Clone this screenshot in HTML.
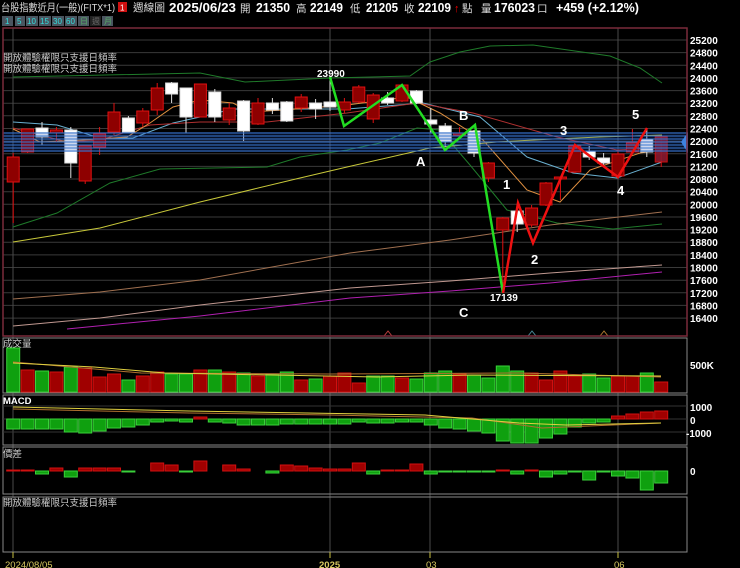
<!DOCTYPE html>
<html><head><meta charset="utf-8"><style>
html,body{margin:0;padding:0;background:#000;width:740px;height:568px;overflow:hidden}
svg{display:block}
text{font-family:"Liberation Sans","Noto Sans CJK TC",sans-serif}
</style></head><body>
<svg width="740" height="568" viewBox="0 0 740 568" xmlns="http://www.w3.org/2000/svg">
<rect width="740" height="568" fill="#000"/>
<!-- header -->
<text x="1" y="11" font-size="10.5" fill="#ddd" textLength="114" lengthAdjust="spacingAndGlyphs">台股指數近月(一般)(FITX*1)</text>
<rect x="118" y="2" width="9" height="10" fill="#d01010"/><text x="120" y="10.5" font-size="8" fill="#fff">1</text>
<text x="133" y="11" font-size="10.5" fill="#ddd" textLength="32" lengthAdjust="spacingAndGlyphs">週線圖</text>
<g font-size="13" font-weight="bold" fill="#fff">
<text x="169" y="12" textLength="67" lengthAdjust="spacingAndGlyphs">2025/06/23</text>
<text x="240" y="12" font-size="10.5" font-weight="normal" fill="#ddd">開</text><text x="256" y="12" textLength="34" lengthAdjust="spacingAndGlyphs">21350</text>
<text x="296" y="12" font-size="10.5" font-weight="normal" fill="#ddd">高</text><text x="310" y="12" textLength="33" lengthAdjust="spacingAndGlyphs">22149</text>
<text x="350" y="12" font-size="10.5" font-weight="normal" fill="#ddd">低</text><text x="366" y="12" textLength="32" lengthAdjust="spacingAndGlyphs">21205</text>
<text x="404" y="12" font-size="10.5" font-weight="normal" fill="#ddd">收</text><text x="418" y="12" textLength="33" lengthAdjust="spacingAndGlyphs">22109</text>
<text x="454" y="12" fill="#e00" font-size="11">↑</text><text x="462" y="12" font-size="10.5" font-weight="normal" fill="#ddd">點</text>
<text x="481" y="12" font-size="10.5" font-weight="normal" fill="#ddd">量</text><text x="494" y="12" textLength="41" lengthAdjust="spacingAndGlyphs">176023</text>
<text x="537" y="12" font-size="10.5" font-weight="normal" fill="#ddd">口</text>
<text x="556" y="12" textLength="83" lengthAdjust="spacingAndGlyphs">+459 (+2.12%)</text>
</g>
<!-- buttons -->
<g font-size="8" fill="#3dd">
<rect x="2" y="16" width="11" height="10" fill="#4a5560"/><text x="5" y="24">1</text>
<rect x="15" y="16" width="10" height="10" fill="#4a5560"/><text x="17" y="24">5</text>
<rect x="26" y="16" width="12" height="10" fill="#4a5560"/><text x="27" y="24">10</text>
<rect x="39" y="16" width="12" height="10" fill="#4a5560"/><text x="40" y="24">15</text>
<rect x="52" y="16" width="12" height="10" fill="#4a5560"/><text x="53" y="24">30</text>
<rect x="65" y="16" width="12" height="10" fill="#4a5560"/><text x="66" y="24">60</text>
<rect x="78" y="16" width="11" height="10" fill="#4a5560"/><text x="80" y="24" fill="#5a6">日</text>
<rect x="90" y="16" width="11" height="10" fill="#222"/><text x="92" y="24" fill="#666">週</text>
<rect x="102" y="16" width="11" height="10" fill="#4a5560"/><text x="104" y="24" fill="#5a6">月</text>
</g>
<!-- main panel grid -->
<g stroke="#3a3a3a" stroke-width="1">
<line x1="3" x2="687" y1="40" y2="40"/><line x1="3" x2="687" y1="52.6" y2="52.6"/><line x1="3" x2="687" y1="65.3" y2="65.3"/><line x1="3" x2="687" y1="77.9" y2="77.9"/><line x1="3" x2="687" y1="90.6" y2="90.6"/><line x1="3" x2="687" y1="103.2" y2="103.2"/><line x1="3" x2="687" y1="115.8" y2="115.8"/><line x1="3" x2="687" y1="128.5" y2="128.5"/><line x1="3" x2="687" y1="141.1" y2="141.1"/><line x1="3" x2="687" y1="153.8" y2="153.8"/><line x1="3" x2="687" y1="166.4" y2="166.4"/><line x1="3" x2="687" y1="179" y2="179"/><line x1="3" x2="687" y1="191.7" y2="191.7"/><line x1="3" x2="687" y1="204.3" y2="204.3"/><line x1="3" x2="687" y1="217" y2="217"/><line x1="3" x2="687" y1="229.6" y2="229.6"/><line x1="3" x2="687" y1="242.2" y2="242.2"/><line x1="3" x2="687" y1="254.9" y2="254.9"/><line x1="3" x2="687" y1="267.5" y2="267.5"/><line x1="3" x2="687" y1="280.2" y2="280.2"/><line x1="3" x2="687" y1="292.8" y2="292.8"/><line x1="3" x2="687" y1="305.4" y2="305.4"/><line x1="3" x2="687" y1="318.1" y2="318.1"/>
</g>
<g stroke="#4a4a4a">
<line x1="13" x2="13" y1="28" y2="552"/><line x1="330" x2="330" y1="28" y2="552"/><line x1="430" x2="430" y1="28" y2="552"/><line x1="618" x2="618" y1="28" y2="552"/>
</g>
<!-- long MAs -->
<g fill="none" stroke-width="1">
<polyline stroke="#1f7a2a" points="13,77 60,76 200,73 245,82 330,78 410,76 430,62 460,52 490,46 533,45 575,51 610,56 640,68 662,83"/>
<polyline stroke="#1f7a2a" points="13,227 57,213 110,183 160,169 267,167 300,157 347,150 380,143 417,128 440,130 470,165 507,210 557,223 613,229 662,224"/>
<polyline stroke="#c8c83a" points="13,242 100,228 200,202 300,178 347,167 430,148 497,142 553,139 600,137 662,135"/>
<polyline stroke="#a07050" points="13,299 100,292 200,280 350,253 450,240 550,225 662,212"/>
<polyline stroke="#c09890" points="13,326 100,318 200,305 350,288 450,281 550,273 662,265"/>
<polyline stroke="#b020b0" points="67,329 200,316 350,298 450,291 550,283 662,272"/>
<polyline stroke="#6ab0d0" points="13,122 57,125 100,138 133,138 173,123 200,117 233,109 347,109 423,103 480,117 527,157 573,173 617,178 662,162"/>
<polyline stroke="#b03030" points="13,128 67,142 100,140 150,125 200,122 267,122 347,113 417,103 473,113 557,137 617,150 662,148"/>
<polyline stroke="#e09040" points="13,129 40,142 83,140 127,137 150,123 173,107 200,100 233,103 250,112 283,110 347,105 407,97 440,113 483,140 527,190 560,202 590,170 640,153 662,150"/>
</g>
<text x="3" y="61" font-size="9.5" fill="#ccc">開放體驗權限只支援日頻率</text>
<text x="3" y="72" font-size="9.5" fill="#ccc">開放體驗權限只支援日頻率</text>
<!-- candles -->
<g stroke-width="1">
<g stroke="#e01010" fill="#8e0000">
<line x1="13.2" x2="13.2" y1="153" y2="223"/><rect x="7.2" y="157" width="12" height="25"/>
<line x1="27.6" x2="27.6" y1="129" y2="153"/><rect x="21.6" y="129" width="12" height="23"/>
<line x1="56.4" x2="56.4" y1="127" y2="142"/><rect x="50.4" y="130" width="12" height="3"/>
<line x1="85.2" x2="85.2" y1="146" y2="184"/><rect x="79.2" y="146" width="12" height="35"/>
<line x1="99.6" x2="99.6" y1="127" y2="155"/><rect x="93.6" y="134" width="12" height="13"/>
<line x1="114" x2="114" y1="103" y2="135"/><rect x="108" y="112" width="12" height="20"/>
<line x1="142.8" x2="142.8" y1="108" y2="127"/><rect x="136.8" y="111" width="12" height="12"/>
<line x1="157.2" x2="157.2" y1="83" y2="115"/><rect x="151.2" y="88" width="12" height="22"/>
<line x1="200.4" x2="200.4" y1="84" y2="117"/><rect x="194.4" y="84" width="12" height="33"/>
<line x1="229.2" x2="229.2" y1="103" y2="125"/><rect x="223.2" y="108" width="12" height="12"/>
<line x1="258" x2="258" y1="98" y2="125"/><rect x="252" y="103" width="12" height="21"/>
<line x1="301.2" x2="301.2" y1="94" y2="112"/><rect x="295.2" y="97" width="12" height="11"/>
<line x1="344.4" x2="344.4" y1="98" y2="113"/><rect x="338.4" y="102" width="12" height="8"/>
<line x1="358.8" x2="358.8" y1="85" y2="103"/><rect x="352.8" y="87" width="12" height="15"/>
<line x1="373.2" x2="373.2" y1="93" y2="123"/><rect x="367.2" y="95" width="12" height="24"/>
<line x1="402" x2="402" y1="84" y2="102"/><rect x="396" y="85" width="12" height="16"/>
<line x1="459.6" x2="459.6" y1="127" y2="135"/><rect x="453.6" y="133" width="12" height="2"/>
<line x1="488.4" x2="488.4" y1="162" y2="182"/><rect x="482.4" y="163" width="12" height="15"/>
<line x1="502.8" x2="502.8" y1="217" y2="293"/><rect x="496.8" y="218" width="12" height="12"/>
<line x1="531.6" x2="531.6" y1="205" y2="227"/><rect x="525.6" y="208" width="12" height="17"/>
<line x1="546" x2="546" y1="182" y2="206"/><rect x="540" y="183" width="12" height="22"/>
<line x1="560.4" x2="560.4" y1="177" y2="200"/><rect x="554.4" y="177" width="12" height="2"/>
<line x1="574.8" x2="574.8" y1="145" y2="173"/><rect x="568.8" y="146" width="12" height="26"/>
<line x1="618" x2="618" y1="151" y2="178"/><rect x="612" y="154" width="12" height="22"/>
<line x1="632.4" x2="632.4" y1="129" y2="153"/><rect x="626.4" y="143" width="12" height="9"/>
<line x1="661.2" x2="661.2" y1="136" y2="167"/><rect x="655.2" y="137" width="12" height="25" fill="#8a1a30" opacity="0.9"/>
</g>
<g stroke="#ddd" fill="#fff">
<line x1="42" x2="42" y1="122" y2="145"/><rect x="36" y="128" width="12" height="9"/>
<line x1="70.8" x2="70.8" y1="127" y2="178"/><rect x="64.8" y="130" width="12" height="33"/>
<line x1="128.4" x2="128.4" y1="116" y2="133"/><rect x="122.4" y="118" width="12" height="14"/>
<line x1="171.6" x2="171.6" y1="82" y2="103"/><rect x="165.6" y="83" width="12" height="11"/>
<line x1="186" x2="186" y1="88" y2="133"/><rect x="180" y="88" width="12" height="29"/>
<line x1="214.8" x2="214.8" y1="89" y2="122"/><rect x="208.8" y="92" width="12" height="25"/>
<line x1="243.6" x2="243.6" y1="100" y2="141"/><rect x="237.6" y="101" width="12" height="30"/>
<line x1="272.4" x2="272.4" y1="98" y2="114"/><rect x="266.4" y="103" width="12" height="7"/>
<line x1="286.8" x2="286.8" y1="101" y2="122"/><rect x="280.8" y="102" width="12" height="19"/>
<line x1="315.6" x2="315.6" y1="99" y2="119"/><rect x="309.6" y="103" width="12" height="6"/>
<line x1="330" x2="330" y1="78" y2="111"/><rect x="324" y="102" width="12" height="5"/>
<line x1="387.6" x2="387.6" y1="92" y2="105"/><rect x="381.6" y="98" width="12" height="5"/>
<line x1="416.4" x2="416.4" y1="90" y2="104"/><rect x="410.4" y="91" width="12" height="12"/>
<line x1="430.8" x2="430.8" y1="108" y2="133"/><rect x="424.8" y="120" width="12" height="4"/>
<line x1="445.2" x2="445.2" y1="123" y2="147"/><rect x="439.2" y="126" width="12" height="16"/>
<line x1="474" x2="474" y1="130" y2="157"/><rect x="468" y="131" width="12" height="22"/>
<line x1="517.2" x2="517.2" y1="210" y2="232"/><rect x="511.2" y="211" width="12" height="13"/>
<line x1="589.2" x2="589.2" y1="146" y2="160"/><rect x="583.2" y="151" width="12" height="6"/>
<line x1="603.6" x2="603.6" y1="153" y2="165"/><rect x="597.6" y="158" width="12" height="5"/>
<line x1="646.8" x2="646.8" y1="129" y2="157"/><rect x="640.8" y="139" width="12" height="13"/>
</g>
</g>
<!-- blue band (overlay) -->
<rect x="3" y="132" width="684" height="20" fill="#1a4ab0" opacity="0.22"/>
<g stroke="#3a78d0" stroke-width="0.9">
<line x1="3" x2="687" y1="133" y2="133"/><line x1="3" x2="687" y1="136" y2="136"/><line x1="3" x2="687" y1="139" y2="139"/><line x1="3" x2="687" y1="142" y2="142"/><line x1="3" x2="687" y1="145" y2="145"/><line x1="3" x2="687" y1="148" y2="148"/><line x1="3" x2="687" y1="151" y2="151"/>
</g>
<polygon points="688,132 681,142 688,153" fill="#3d82e0"/>
<!-- wave lines -->
<polyline fill="none" stroke="#22dd22" stroke-width="2.5" points="330,77 344,126 402,85 445,150 475,125 503,293"/>
<polyline fill="none" stroke="#ee1111" stroke-width="2.5" points="503,293 518,203 533,243 575,145 618,177 647,128"/>
<g font-weight="bold" fill="#fff">
<text x="317" y="77" font-size="10">23990</text>
<text x="490" y="301" font-size="10">17139</text>
<text x="416" y="166" font-size="13">A</text>
<text x="459" y="120" font-size="13">B</text>
<text x="459" y="317" font-size="13">C</text>
<text x="503" y="189" font-size="13">1</text>
<text x="531" y="264" font-size="13">2</text>
<text x="560" y="135" font-size="13">3</text>
<text x="617" y="195" font-size="13">4</text>
<text x="632" y="119" font-size="13">5</text>
</g>
<g fill="none" stroke-width="1">
<polyline stroke="#c04040" points="384,336 388,331 392,336"/>
<polyline stroke="#4a8a9a" points="528,336 532,331 536,336"/>
<polyline stroke="#b07a30" points="600,336 604,331 608,336"/>
</g>
<!-- price labels -->
<g font-size="10" font-weight="bold" fill="#fff">
<text x="690" y="44">25200</text><text x="690" y="56.6">24800</text><text x="690" y="69.3">24400</text><text x="690" y="81.9">24000</text><text x="690" y="94.6">23600</text><text x="690" y="107.2">23200</text><text x="690" y="119.8">22800</text><text x="690" y="132.5">22400</text><text x="690" y="145.1">22000</text><text x="690" y="157.8">21600</text><text x="690" y="170.4">21200</text><text x="690" y="183">20800</text><text x="690" y="195.7">20400</text><text x="690" y="208.3">20000</text><text x="690" y="221">19600</text><text x="690" y="233.6">19200</text><text x="690" y="246.2">18800</text><text x="690" y="258.9">18400</text><text x="690" y="271.5">18000</text><text x="690" y="284.2">17600</text><text x="690" y="296.8">17200</text><text x="690" y="309.4">16800</text><text x="690" y="322.1">16400</text>
</g>
<rect x="3" y="28" width="684" height="308" fill="none" stroke="#7a2a3a" stroke-width="1.5"/>
<!-- volume panel -->
<rect x="3" y="338" width="684" height="55" fill="none" stroke="#888"/>
<text x="3" y="347" font-size="9.5" fill="#ccc">成交量</text>
<text x="690" y="369" font-size="10" font-weight="bold" fill="#fff">500K</text>
<g stroke-width="1">
<g fill="#0fa00f" stroke="#3ad03a">
<rect x="6.7" y="348" width="13" height="44"/><rect x="35.5" y="371" width="13" height="21"/><rect x="64.3" y="367" width="13" height="25"/><rect x="121.9" y="380" width="13" height="12"/><rect x="165.1" y="374" width="13" height="18"/><rect x="179.5" y="374" width="13" height="18"/><rect x="208.3" y="370" width="13" height="22"/><rect x="237.1" y="373" width="13" height="19"/><rect x="265.9" y="374" width="13" height="18"/><rect x="280.3" y="372" width="13" height="20"/><rect x="309.1" y="379" width="13" height="13"/><rect x="366.7" y="376" width="13" height="16"/><rect x="381.1" y="376" width="13" height="16"/><rect x="409.9" y="379" width="13" height="13"/><rect x="424.3" y="373" width="13" height="19"/><rect x="438.7" y="371" width="13" height="21"/><rect x="467.5" y="375" width="13" height="17"/><rect x="481.9" y="378" width="13" height="14"/><rect x="496.3" y="366" width="13" height="26"/><rect x="510.7" y="371" width="13" height="21"/><rect x="582.7" y="374" width="13" height="18"/><rect x="597.1" y="378" width="13" height="14"/><rect x="640.3" y="373" width="13" height="19"/>
</g>
<g fill="#a00000" stroke="#d01010">
<rect x="21.1" y="370" width="13" height="22"/><rect x="49.9" y="372" width="13" height="20"/><rect x="78.7" y="368" width="13" height="24"/><rect x="93.1" y="377" width="13" height="15"/><rect x="107.5" y="374" width="13" height="18"/><rect x="136.3" y="376" width="13" height="16"/><rect x="150.7" y="372" width="13" height="20"/><rect x="193.9" y="370" width="13" height="22"/><rect x="222.7" y="372" width="13" height="20"/><rect x="251.5" y="376" width="13" height="16"/><rect x="294.7" y="380" width="13" height="12"/><rect x="323.5" y="376" width="13" height="16"/><rect x="337.9" y="373" width="13" height="19"/><rect x="352.3" y="383" width="13" height="9"/><rect x="395.5" y="378" width="13" height="14"/><rect x="453.1" y="374" width="13" height="18"/><rect x="525.1" y="373" width="13" height="19"/><rect x="539.5" y="380" width="13" height="12"/><rect x="553.9" y="371" width="13" height="21"/><rect x="568.3" y="376" width="13" height="16"/><rect x="611.5" y="376" width="13" height="16"/><rect x="625.9" y="376" width="13" height="16"/><rect x="654.7" y="382" width="13" height="10"/>
</g>
</g>
<polyline fill="none" stroke="#b07030" points="13,362 141,373 330,374 519,373 661,377"/>
<polyline fill="none" stroke="#e0d040" points="13,363 94,367 165,373 377,377 472,375 661,376"/>
<!-- MACD panel -->
<rect x="3" y="395" width="684" height="50" fill="none" stroke="#888"/>
<line x1="3" x2="687" y1="406" y2="406" stroke="#333"/><line x1="3" x2="687" y1="419" y2="419" stroke="#333"/><line x1="3" x2="687" y1="432" y2="432" stroke="#333"/>
<text x="3" y="404" font-size="9.5" font-weight="bold" fill="#fff">MACD</text>
<g font-size="10" font-weight="bold" fill="#fff"><text x="690" y="411">1000</text><text x="690" y="424">0</text><text x="686" y="437">-1000</text></g>
<g fill="#0fa00f" stroke="#3ad03a">
<rect x="6.7" y="419" width="13" height="10"/><rect x="21.1" y="419" width="13" height="10"/><rect x="35.5" y="419" width="13" height="10"/><rect x="49.9" y="419" width="13" height="10"/><rect x="64.3" y="419" width="13" height="13"/><rect x="78.7" y="419" width="13" height="14"/><rect x="93.1" y="419" width="13" height="12"/><rect x="107.5" y="419" width="13" height="9"/><rect x="121.9" y="419" width="13" height="8"/><rect x="136.3" y="419" width="13" height="6"/><rect x="150.7" y="419" width="13" height="3"/><rect x="165.1" y="419" width="13" height="2"/><rect x="179.5" y="419" width="13" height="3"/><rect x="208.3" y="419" width="13" height="3"/><rect x="222.7" y="419" width="13" height="4"/><rect x="237.1" y="419" width="13" height="6"/><rect x="251.5" y="419" width="13" height="6"/><rect x="265.9" y="419" width="13" height="6"/><rect x="280.3" y="419" width="13" height="5"/><rect x="294.7" y="419" width="13" height="5"/><rect x="309.1" y="419" width="13" height="5"/><rect x="323.5" y="419" width="13" height="5"/><rect x="337.9" y="419" width="13" height="5"/><rect x="352.3" y="419" width="13" height="3"/><rect x="366.7" y="419" width="13" height="4"/><rect x="381.1" y="419" width="13" height="4"/><rect x="395.5" y="419" width="13" height="3"/><rect x="409.9" y="419" width="13" height="3"/><rect x="424.3" y="419" width="13" height="6"/><rect x="438.7" y="419" width="13" height="9"/><rect x="453.1" y="419" width="13" height="10"/><rect x="467.5" y="419" width="13" height="12"/><rect x="481.9" y="419" width="13" height="14"/><rect x="496.3" y="419" width="13" height="22"/><rect x="510.7" y="419" width="13" height="24"/><rect x="525.1" y="419" width="13" height="24"/><rect x="539.5" y="419" width="13" height="19"/><rect x="553.9" y="419" width="13" height="15"/><rect x="568.3" y="419" width="13" height="8"/><rect x="582.7" y="419" width="13" height="4"/><rect x="597.1" y="419" width="13" height="3"/>
</g>
<g fill="#a00000" stroke="#d01010">
<rect x="193.9" y="417" width="13" height="2"/><rect x="611.5" y="416" width="13" height="3"/><rect x="625.9" y="414" width="13" height="5"/><rect x="640.3" y="412" width="13" height="7"/><rect x="654.7" y="411" width="13" height="8"/>
</g>
<polyline fill="none" stroke="#b07030" points="13,409 189,413 330,415 472,418 542,428 613,425 661,423"/>
<polyline fill="none" stroke="#e0d040" points="13,407 189,411 425,415 519,423 566,425 661,423"/>
<!-- spread panel -->
<rect x="3" y="447" width="684" height="47" fill="none" stroke="#888"/>
<text x="3" y="457" font-size="9.5" fill="#ccc">價差</text>
<text x="690" y="475" font-size="10" font-weight="bold" fill="#fff">0</text>
<g fill="#a00000" stroke="#d01010">
<rect x="6.7" y="470" width="13" height="1"/><rect x="21.1" y="470" width="13" height="1"/><rect x="49.9" y="468" width="13" height="3"/><rect x="78.7" y="468" width="13" height="3"/><rect x="93.1" y="468" width="13" height="3"/><rect x="107.5" y="468" width="13" height="3"/><rect x="150.7" y="463" width="13" height="8"/><rect x="165.1" y="465" width="13" height="6"/><rect x="193.9" y="461" width="13" height="10"/><rect x="222.7" y="465" width="13" height="6"/><rect x="237.1" y="469" width="13" height="2"/><rect x="280.3" y="465" width="13" height="6"/><rect x="294.7" y="466" width="13" height="5"/><rect x="309.1" y="468" width="13" height="3"/><rect x="323.5" y="469" width="13" height="2"/><rect x="337.9" y="469" width="13" height="2"/><rect x="352.3" y="463" width="13" height="8"/><rect x="381.1" y="470" width="13" height="1"/><rect x="395.5" y="470" width="13" height="1"/><rect x="409.9" y="464" width="13" height="7"/><rect x="496.3" y="470" width="13" height="1"/><rect x="525.1" y="470" width="13" height="1"/>
</g>
<g fill="#0fa00f" stroke="#3ad03a">
<rect x="35.5" y="471" width="13" height="3"/><rect x="64.3" y="471" width="13" height="6"/><rect x="121.9" y="471" width="13" height="1"/><rect x="179.5" y="471" width="13" height="1"/><rect x="265.9" y="471" width="13" height="2"/><rect x="366.7" y="471" width="13" height="3"/><rect x="424.3" y="471" width="13" height="3"/><rect x="438.7" y="471" width="13" height="1"/><rect x="453.1" y="471" width="13" height="1"/><rect x="467.5" y="471" width="13" height="1"/><rect x="481.9" y="471" width="13" height="1"/><rect x="510.7" y="471" width="13" height="3"/><rect x="539.5" y="471" width="13" height="6"/><rect x="553.9" y="471" width="13" height="3"/><rect x="568.3" y="471" width="13" height="1"/><rect x="582.7" y="471" width="13" height="9"/><rect x="597.1" y="471" width="13" height="1"/><rect x="611.5" y="471" width="13" height="5"/><rect x="625.9" y="471" width="13" height="7"/><rect x="640.3" y="471" width="13" height="19"/><rect x="654.7" y="471" width="13" height="12"/>
</g>
<!-- last panel -->
<rect x="3" y="497" width="684" height="55" fill="none" stroke="#888"/>
<text x="3" y="506" font-size="9.5" fill="#ccc">開放體驗權限只支援日頻率</text>
<!-- x axis -->
<g stroke="#c8c040"><line x1="13" x2="13" y1="552" y2="558"/><line x1="330" x2="330" y1="552" y2="558"/><line x1="430" x2="430" y1="552" y2="558"/><line x1="618" x2="618" y1="552" y2="558"/></g>
<g font-size="9.5" fill="#d8c860">
<text x="5" y="568">2024/08/05</text>
<text x="319" y="568" font-weight="bold">2025</text>
<text x="426" y="568">03</text>
<text x="614" y="568">06</text>
</g>
</svg>
</body></html>
